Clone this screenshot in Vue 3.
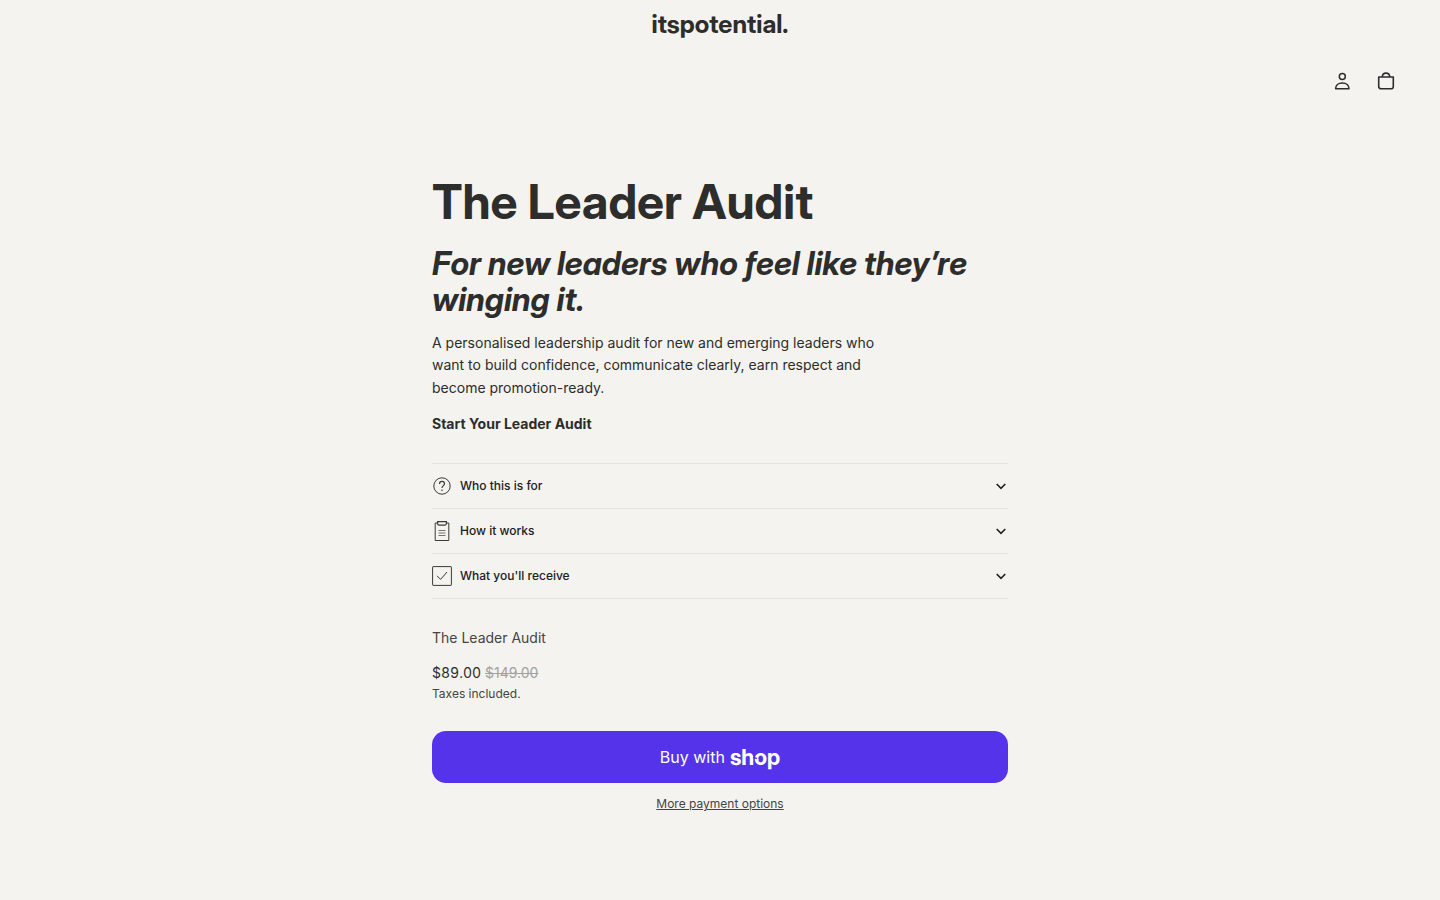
<script setup>
const sections = [
  { id: 'who', label: 'Who this is for' },
  { id: 'how', label: 'How it works' },
  { id: 'receive', label: "What you'll receive" },
]
</script>

<template>
  <div class="page">
    <header class="header">
      <a class="brand" href="#">itspotential.</a>
      <nav class="actions" aria-label="Account and cart">
        <a class="action" href="#account" aria-label="Account">
          <svg width="20" height="20" viewBox="0 0 20 20" fill="none" stroke="currentColor" stroke-width="1.5" stroke-linejoin="round">
            <circle cx="10.300" cy="5.600" r="3" />
            <path d="M3.600 17.800c0-3.600 2.700-5.900 6.700-5.900s6.700 2.300 6.700 5.900z" />
          </svg>
        </a>
        <a class="action" href="#cart" aria-label="Cart">
          <svg width="20" height="20" viewBox="0 0 20 20" fill="none" stroke="currentColor" stroke-width="1.600" stroke-linejoin="round">
            <path d="M2.700 6h14.600v9.500a2.300 2.300 0 0 1-2.300 2.300H5a2.300 2.300 0 0 1-2.300-2.300z" />
            <path d="M6.300 6c0-2.400 1.400-3.900 3.700-3.900S13.700 3.600 13.700 6" />
          </svg>
        </a>
      </nav>
    </header>

    <main class="product">
      <h1>The Leader Audit</h1>
      <h2>For new leaders who feel like they’re winging it.</h2>
      <p class="intro">
        A personalised leadership audit for new and emerging leaders who want to build confidence,
        communicate clearly, earn respect and become promotion-ready.
      </p>
      <p class="start"><strong>Start Your Leader Audit</strong></p>

      <div class="accordion">
        <button v-for="s in sections" :key="s.id" class="row" type="button" aria-expanded="false">
          <svg v-if="s.id === 'who'" class="icon" width="20" height="20" viewBox="0 0 20 20" fill="none" stroke="currentColor">
            <circle cx="10" cy="10" r="8.200" />
            <path d="M7.500 8c0-1.600 1-2.600 2.500-2.600s2.500.9 2.500 2.300c0 1.900-2.500 2.100-2.500 4.300" stroke-width="1.200" />
            <circle cx="10" cy="14.200" r=".8" fill="currentColor" stroke="none" />
          </svg>
          <svg v-else-if="s.id === 'how'" class="icon" width="20" height="20" viewBox="0 0 20 20" fill="none" stroke="currentColor">
            <path d="M6 2H3.200v17.500h13.600V2H14" />
            <path d="M5.600 .6h8.800v1.900A1.600 1.600 0 0 1 12.800 4.100H7.200A1.600 1.600 0 0 1 5.600 2.500z" stroke-width="1.200" />
            <path d="M6.500 9.500h7M6.500 12h7M6.500 14.500h7" stroke-width=".7" />
          </svg>
          <svg v-else class="icon" width="20" height="20" viewBox="0 0 20 20" fill="none" stroke="currentColor">
            <rect x=".6" y=".6" width="18.800" height="18.800" rx=".5" />
            <path d="M5 9.800l3.600 3.600L15 6" />
          </svg>
          <span class="label">{{ s.label }}</span>
          <svg class="chevron" width="14" height="14" viewBox="0 0 14 14" fill="none" stroke="currentColor" stroke-width="1.600">
            <path d="M2.700 5l4.300 4.300L11.300 5" />
          </svg>
        </button>
      </div>

      <p class="name">The Leader Audit</p>
      <div class="price">
        <span class="now">$89.00</span>
        <s>$149.00</s>
      </div>
      <p class="tax">Taxes included.</p>

      <button class="buy" type="button">
        <span>Buy with</span>
        <span class="shop">shop<svg class="notch" width="8" height="8" viewBox="0 0 8 8" fill="none">
          <path d="M0 3.500L4 4.500" stroke="#5433eb" stroke-width="1.300" />
          <path d="M3 6.500L5.500 5.500" stroke="#fff" stroke-width="1.500" />
        </svg></span>
      </button>
      <a class="more" href="#payment">More payment options</a>
    </main>
  </div>
</template>

<style>
body {
  background: #f4f3ef;
}
</style>

<style scoped>
.page {
  color: #2d2d2b;
  font-family: Inter, "Liberation Sans", sans-serif;
  font-size: 14px;
}
.header {
  display: flex;
  flex-direction: column;
  align-items: center;
}
.brand,
h1,
h2 {
  font-family: "Inter Display", Inter, "Liberation Sans", sans-serif;
}
.brand {
  color: inherit;
  font-size: 25px;
  font-weight: 700;
  line-height: 48px;
  text-decoration: none;
}
.actions {
  display: flex;
  align-self: stretch;
  justify-content: flex-end;
  padding: 11px 32px;
}
.action {
  display: flex;
  align-items: center;
  justify-content: center;
  width: 44px;
  height: 44px;
  color: inherit;
}
.product {
  display: flex;
  flex-direction: column;
  width: 40%;
  margin: 0 auto;
  padding: 62px 0 40px;
}
h1,
h2,
p {
  margin: 0;
}
h1 {
  font-size: 48px;
  line-height: 52px;
}
h2 {
  margin-top: 18px;
  font-size: 32px;
  font-style: italic;
  line-height: 36px;
}
.intro {
  max-width: 448px;
  margin-top: 14px;
  line-height: 1.6;
}
.start {
  margin-top: 14px;
  line-height: 22px;
}
.accordion {
  display: flex;
  flex-direction: column;
  margin-top: 28px;
  border-top: 1px solid #e4e3df;
}
.row {
  display: flex;
  align-items: center;
  gap: 8px;
  height: 45px;
  padding: 0;
  border: 0;
  border-bottom: 1px solid #e4e3df;
  background: none;
  color: #20201e;
  font: 500 12px Inter, "Liberation Sans", sans-serif;
  text-align: left;
}
.icon {
  color: #3a3a38;
}
.label {
  flex: 1;
  line-height: 16px;
}
.name {
  margin-top: 28px;
  color: #454543;
  line-height: 22px;
}
.price {
  display: flex;
  gap: 4px;
  margin-top: 13px;
  line-height: 22px;
}
.now {
  font-variant-numeric: tabular-nums;
}
.price s {
  color: #a3a29f;
}
.tax {
  color: #454543;
  font-size: 12px;
  line-height: 20px;
}
.buy {
  display: flex;
  align-items: center;
  justify-content: center;
  gap: 5px;
  height: 52px;
  margin-top: 27px;
  border: 0;
  border-radius: 14px;
  background: #5433eb;
  color: #fff;
  font: 400 16px Inter, "Liberation Sans", sans-serif;
}
.shop {
  position: relative;
  font-family: "Inter Display", Inter, "Liberation Sans", sans-serif;
  font-size: 22px;
  font-weight: 700;
  line-height: 24px;
}
.notch {
  position: absolute;
  top: 9px;
  left: 23px;
}
.more {
  align-self: center;
  margin-top: 12px;
  color: #454543;
  font-size: 12px;
  line-height: 18px;
}
</style>
